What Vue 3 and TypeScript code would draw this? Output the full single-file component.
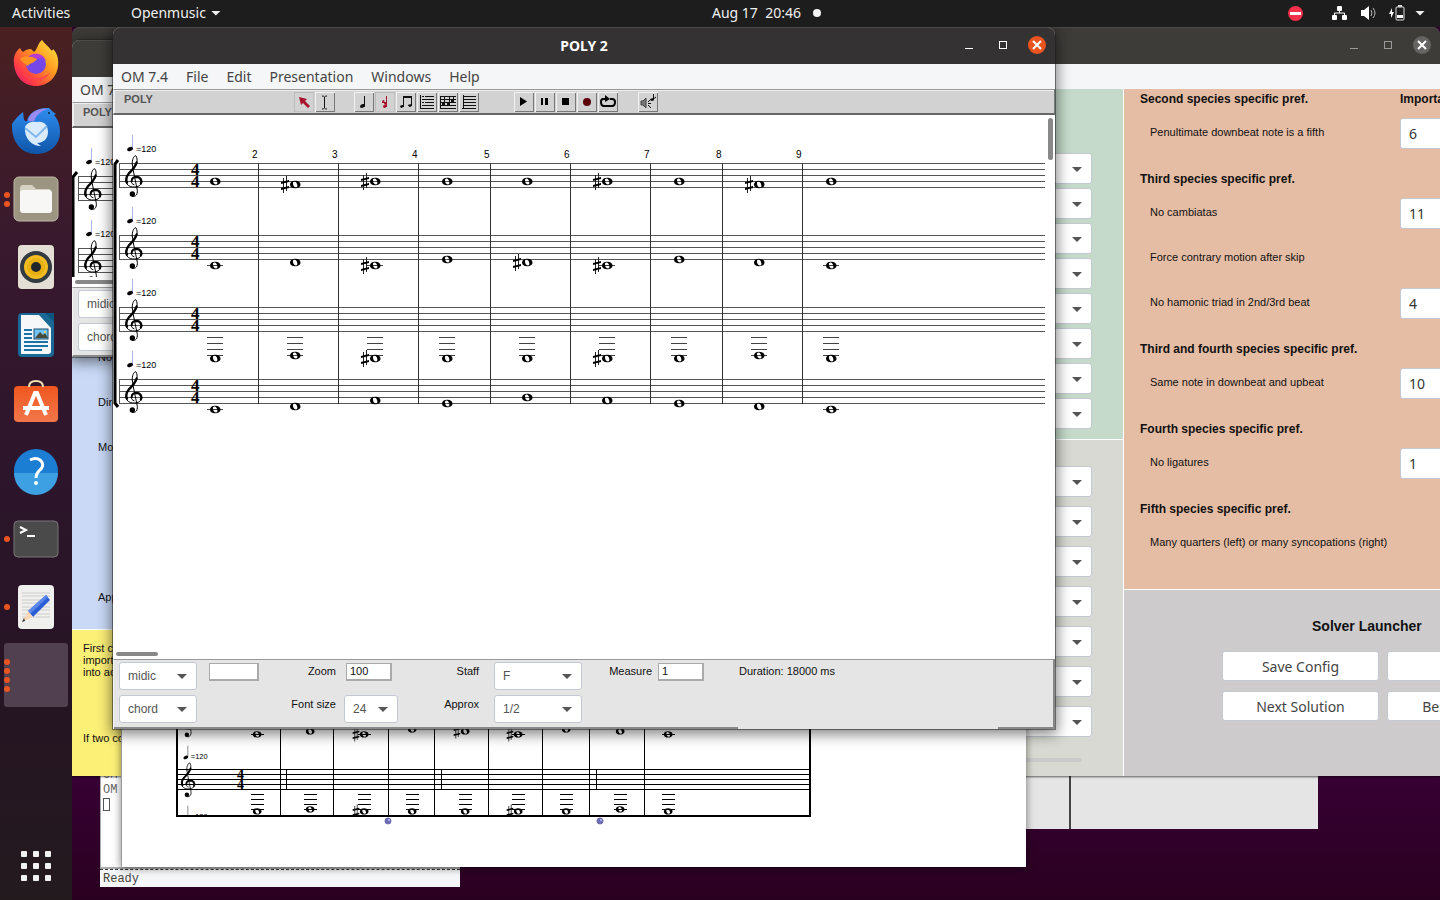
<script setup lang="ts">
interface Shape {
  d: string
  fill?: string
  stroke?: string
  width?: number
}
interface Tool {
  label: string
  pressed?: boolean
  shapes: Shape[]
}
interface Note {
  x: number
  y: number
  sharp?: boolean
  ledgers?: number[]
}
interface PrefItem {
  label: string
  value?: string
}
interface PrefGroup {
  title: string
  items: PrefItem[]
}

const menus: string[] = ['OM 7.4', 'File', 'Edit', 'Presentation', 'Windows', 'Help']
const ink = '#111'
const red = '#a8142c'

const toolGroups: Tool[][] = [
  [
    { label: 'Select', pressed: true, shapes: [{ d: 'M5 5 L13 7 L11 9 L16 14 L14 16 L9 11 L7 13 Z', fill: red }] },
    { label: 'Insert', shapes: [{ d: 'M7 4 Q9 4 9.5 5 Q10 4 12 4 M9.5 5 V16 M7 17 Q9 17 9.5 16 Q10 17 12 17', stroke: ink, width: 1 }] }
  ],
  [
    { label: 'Note', shapes: [{ d: 'M10.500 4 V15', stroke: ink, width: 1 }, { d: 'M6 14.500 Q6 12.500 8.500 12 H11 Q11 15 8 16 Q6 16 6 14.500 Z', fill: ink }] },
    { label: 'Chord', pressed: true, shapes: [{ d: 'M11.500 4 V15', stroke: red, width: 1 }, { d: 'M8 15 Q8 12 12 12 Q12 16 9 16 Z M7 10 Q7 8 9 8 Q10 9 9 11 H7 Z M9 10 H12 V12 H9 Z', fill: red }] },
    { label: 'Group', shapes: [{ d: 'M7.500 15 V5 H15.500 V14', stroke: ink, width: 1 }, { d: 'M7 4 H16 V6 H7 Z M4 14.500 Q4 12.500 7.500 13 Q7.500 16 5 16 Z M12 13.500 Q12 12 16 12 Q16 15 13.500 15 Z', fill: ink }] },
    { label: 'Measure', shapes: [{ d: 'M3.500 3 V17 M8 4.500 H17 M8 7.500 H17 M8 10.500 H17 M8 13.500 H17 M4 16.500 H17', stroke: ink, width: 1 }, { d: 'M5 4 H7 V5 H5 Z M5 7 H8 V8 H5 Z M5 10 H7 V11 H5 Z M5 13 H8 V14 H5 Z', fill: ink }] },
    { label: 'Voice', shapes: [{ d: 'M2 4.500 H18 M2 7.500 H18 M2 10.500 H18 M2 13.500 H18 M6.500 5 V13 M11.500 5 V12 M15.500 4 V10 M2.500 4 V16 M2 16.500 H18', stroke: ink, width: 1 }, { d: 'M4 11 H7 V14 H4 Z M9 10 H12 V13 H9 Z M13 8 H16 V10 H13 Z', fill: ink }] },
    { label: 'Poly', shapes: [{ d: 'M4.500 3 V17 M4 4.500 H17 M4 7.500 H17 M4 10.500 H17 M4 13.500 H17 M3 16.500 H17', stroke: ink, width: 1 }] }
  ],
  [
    { label: 'Play', shapes: [{ d: 'M6 5 L13 9.500 L6 14 Z', fill: '#000' }] },
    { label: 'Pause', shapes: [{ d: 'M6 6 H8 V13 H6 Z M10 6 H13 V13 H10 Z', fill: '#000' }] },
    { label: 'Stop', shapes: [{ d: 'M6 6 H13 V13 H6 Z', fill: '#000' }] },
    { label: 'Record', shapes: [{ d: 'M6 10 a4 4 0 1 0 8 0 a4 4 0 1 0 -8 0', fill: '#5c0008' }] },
    { label: 'Loop', shapes: [{ d: 'M12 7 H14 Q17 7 17 10 Q17 14 14 14 H6 Q3 14 3 10 Q3 7 5 7 H8', stroke: '#000', width: 2 }, { d: 'M7 3 L12 7 L7 10 Z', fill: '#000' }] }
  ],
  [
    { label: 'Player', shapes: [{ d: 'M3 9 H5 L8 6 V16 L5 13 H3 Z', fill: '#777', stroke: '#444', width: 1 }, { d: 'M10 10 L12 8 M10 11.500 H13 M10 13 L13 16 M15.500 2 V7 L18 5', stroke: ink, width: 1 }, { d: 'M12 8 Q12 6 16 6 V8 Q14 10 12 8 Z', fill: ink }] }
  ]
]

const xs: number[] = [102, 182, 262, 334, 414, 494, 566, 646, 718]
const bars: number[] = [145, 225, 305, 377, 457, 537, 609, 689]
const staffTops: number[] = [48, 120, 192, 264]

function build(ys: number[], sharps: number[], ledgers: (y: number) => number[]): Note[] {
  return ys.map((y, i) => ({ x: xs[i], y, sharp: sharps.includes(i), ledgers: ledgers(y) }))
}
const notes: Note[] = [
  ...build([66, 69, 66, 66, 66, 66, 66, 69, 66], [1, 2, 5, 7], () => []),
  ...build([150, 147, 150, 144, 147, 150, 144, 147, 150], [2, 4, 5], y => (y === 150 ? [150] : [])),
  ...build([243, 240, 243, 243, 243, 243, 243, 240, 243], [2, 5], () => [222, 228, 234, 240]),
  ...build([294, 291, 285, 288, 282, 285, 288, 291, 294], [], y => (y === 294 ? [294] : []))
]

// Miniature of the score shown in the patch: staff space is 5px instead of 6px
const miniXs: number[] = [81, 134, 188, 236, 289, 342, 390, 444, 492]
const miniBars: number[] = [104, 157, 212, 258, 312, 366, 413, 468]
const miniTicks: number[] = [110, 265, 420]
const miniNotes: Note[] = [
  ...[34, 31, 34, 29, 31, 34, 29, 31, 34].map((y, i) => ({ x: miniXs[i], y, sharp: [2, 4, 5].includes(i), ledgers: y === 34 ? [34] : [] })),
  ...[111, 109, 111, 111, 111, 111, 111, 109, 111].map((y, i) => ({ x: miniXs[i], y, sharp: [2, 5].includes(i), ledgers: [94, 99, 104, 109] }))
]

const prefs: PrefGroup[] = [
  { title: 'Second species specific pref.', items: [{ label: 'Penultimate downbeat note is a fifth', value: '6' }] },
  {
    title: 'Third species specific pref.',
    items: [{ label: 'No cambiatas', value: '11' }, { label: 'Force contrary motion after skip' }, { label: 'No hamonic triad in 2nd/3rd beat', value: '4' }]
  },
  { title: 'Third and fourth species specific pref.', items: [{ label: 'Same note in downbeat and upbeat', value: '10' }] },
  { title: 'Fourth species specific pref.', items: [{ label: 'No ligatures', value: '1' }] },
  { title: 'Fifth species specific pref.', items: [{ label: 'Many quarters (left) or many syncopations (right)' }] }
]
const solverButtons: string[] = ['Save Config', 'Start', 'Next Solution', 'Best Solution']

const dock: { name: string; dots: number }[] = [
  { name: 'Firefox', dots: 0 },
  { name: 'Thunderbird', dots: 0 },
  { name: 'Files', dots: 2 },
  { name: 'Rhythmbox', dots: 0 },
  { name: 'Writer', dots: 0 },
  { name: 'Software', dots: 0 },
  { name: 'Help', dots: 0 },
  { name: 'Terminal', dots: 1 },
  { name: 'Text Editor', dots: 1 },
  { name: 'Openmusic', dots: 4 }
]
</script>

<template>
  <div class="screen">
    <svg class="defs" width="0" height="0" aria-hidden="true">
      <defs>
        <g id="clef" transform="scale(0.3333)" fill="none" stroke="#000" stroke-linecap="round">
          <path stroke-width="3" d="M22 5 C20 -10 27 -22 32 -22 C37 -17 37 -8 35 0 C32 13 20 24 11 33 C3 42 0 53 5 62 C10 70 20 73 30 72 C43 71 51 64 51 55 C51 45 43 39 34 40 C24 41 18 47 19 55 C19 60 22 64 27 65" />
          <path stroke-width="7" d="M35 -2 C31 12 19 24 11 32 C4 41 2 50 6 59" />
          <path stroke-width="6" d="M47 62 C51 54 47 43 35 42 C26 42 20 47 20 55" />
          <path stroke-width="3" d="M22 5 C25 28 33 60 37 82 C38 95 32 102 22 100" />
          <circle cx="22" cy="93" r="8" fill="#000" stroke="none" />
        </g>
        <path id="whole" fill-rule="evenodd" d="M-5 0.500 C-5 -2 -3 -3.300 0 -3.300 C3 -3.300 5.500 -2 5.500 0.500 C5.500 3 3 4.200 0 4.200 C-3 4.200 -5 3 -5 0.500 Z M-2 -0.500 C-2 1.500 -0.800 3.400 0.800 3.400 C2.300 3.400 2.600 2.400 2.300 1 C1.900 -1 0.800 -2.500 -0.400 -2.500 C-1.700 -2.500 -2 -1.600 -2 -0.500 Z" />
        <g id="sharp">
          <path d="M-1.500 -6 V9 M1.500 -8 V7" stroke="#222" stroke-width="1" />
          <path d="M-4 -2 L4 -4 V-2 L-4 0 Z M-4 4 L4 2 V4 L-4 6 Z" />
        </g>
        <g id="staff-start">
          <rect x="0" y="0" width="1" height="25" fill="#555" />
          <rect x="13" y="-28" width="1" height="14" fill="#aab4f0" />
          <ellipse cx="11" cy="-14" rx="3" ry="2" transform="rotate(-25 11 -14)" />
          <text x="17" y="-11" class="tempo">=120</text>
          <use href="#clef" x="6" y="0" />
        </g>
        <linearGradient id="ff" x1="1" y1="0" x2="0" y2="1"><stop offset="0" stop-color="#fff04a" /><stop offset=".4" stop-color="#ff9a1f" /><stop offset=".75" stop-color="#ff3b45" /><stop offset="1" stop-color="#e3108a" /></linearGradient>
        <linearGradient id="tb" x1="0" y1="0" x2="0" y2="1"><stop offset="0" stop-color="#2e8df0" /><stop offset="1" stop-color="#0f55a8" /></linearGradient>
        <linearGradient id="sw" x1="0" y1="0" x2="0" y2="1"><stop offset="0" stop-color="#f1571f" /><stop offset="1" stop-color="#f0764a" /></linearGradient>
      </defs>
    </svg>

    <header class="topbar">
      <span>Activities</span>
      <span class="app-menu">Openmusic <i class="caret"></i></span>
      <span class="clock">Aug 17&nbsp; 20:46 <i class="unread"></i></span>
      <span class="tray">
        <svg width="15" height="15" viewBox="0 0 15 15"><circle cx="7.500" cy="7.500" r="7.500" fill="#f4304a" /><rect x="2" y="6" width="11" height="3" fill="#fff" /></svg>
        <svg class="net" width="16" height="14" viewBox="0 0 16 14" fill="#fff"><rect x="5" y="0" width="5" height="5" rx="1" /><rect x="0" y="9" width="5" height="5" rx="1" /><rect x="10" y="9" width="5" height="5" rx="1" /><path d="M7.500 4 V7 M2.500 10 V7 H12.500 V10" fill="none" stroke="#fff" /></svg>
        <svg class="vol" width="16" height="14" viewBox="0 0 16 14"><path d="M0 4 H3 L8 0 V14 L3 10 H0 Z" fill="#fff" /><path d="M10 4 Q12 7 10 10 M12 2 Q16 7 12 12" fill="none" stroke="#bbb" /></svg>
        <svg class="bat" width="16" height="16" viewBox="0 0 16 16"><path d="M3 3 L0 9 H2 V13 L5 7 H3 Z" fill="#fff" /><rect x="7" y="2" width="8" height="13" rx="1" fill="none" stroke="#ddd" /><rect x="9" y="0" width="4" height="2" fill="#ddd" /><rect x="8" y="10" width="6" height="3" fill="#fff" /></svg>
        <i class="caret"></i>
      </span>
    </header>

    <div class="workspace">
      <nav class="dock">
        <button v-for="a in dock" :key="a.name" class="dock-item" :class="{ current: a.dots === 4 }" :aria-label="a.name">
          <span class="dots"><i v-for="n in a.dots" :key="n"></i></span>
          <svg width="48" height="48" viewBox="0 0 48 48" aria-hidden="true">
            <template v-if="a.name === 'Firefox'">
              <path d="M2 25 C1 17 4 12 8 9 C9 11 10 12 11 13 C13 11 16 10 19 10 L22 13 C25 11 26 4 30 1 C33 5 36 7 39 11 C40 12 41 11 41 10 C45 14 47 20 46 27 C45 38 36 47 24 47 C12 47 3 38 2 25 Z" fill="url(#ff)" />
              <circle cx="24" cy="25" r="10" fill="#7647e8" />
              <path d="M15 19 C20 13 31 13 34 22 C30 18 27 19 25 20 Z" fill="#b73bd0" />
              <path d="M8 20 C12 16 17 18 20 18 L25 20 C23 24 17 24 16 27 C12 25 10 22 8 20 Z" fill="#ff9420" />
              <path d="M7 29 C12 40 29 43 38 33 C35 43 15 48 7 29 Z" fill="#ff4151" opacity=".7" />
            </template>
            <template v-else-if="a.name === 'Thunderbird'">
              <path d="M0 17 C3 12 7 8 11 5 C12 10 11 15 15 14 C16 6 26 0 37 1 C39 3 41 5 44 7 L42 8 C46 12 48 19 48 25 C48 38 38 47 24 47 C8 47 -1 33 0 17 Z" fill="url(#tb)" />
              <path d="M16 13 C19 4 27 1 36 2 C28 4 24 9 22 14 C19 14 17 15 16 13 Z" fill="#9b8bf0" />
              <path d="M13 20 C15 15 21 14 25 15 C32 14 36 18 36 25 C36 32 31 36 25 36 L29 39 C20 39 12 32 13 20 Z" fill="#d9ecff" />
              <path d="M13 21 L24 30 L35 19" fill="none" stroke="#83b7ea" stroke-width="2" />
              <circle cx="37" cy="6" r="1" fill="#023" />
            </template>
            <template v-else-if="a.name === 'Files'">
              <rect x="2" y="2" width="44" height="44" rx="5" fill="#9b9582" stroke="#bdb8a8" />
              <path d="M8 13 Q8 10 11 10 H20 L24 14 H38 V20 H8 Z" fill="#d5d1c3" /><rect x="8" y="15" width="32" height="23" rx="3" fill="#f7f7f5" />
            </template>
            <template v-else-if="a.name === 'Rhythmbox'">
              <rect x="6" y="2" width="36" height="44" rx="4" fill="#e3dfd5" /><circle cx="24" cy="24" r="16" fill="#333b42" /><circle cx="24" cy="24" r="12" fill="#f3bd22" /><circle cx="24" cy="24" r="9" fill="#e8b012" /><circle cx="24" cy="24" r="5" fill="#22262a" />
            </template>
            <template v-else-if="a.name === 'Writer'">
              <rect x="6" y="2" width="36" height="44" rx="4" fill="#1a6896" /><path d="M9 4 H27 L39 17 V40 Q39 43 36 43 H9 Z" fill="#f5f7f8" /><path d="M33 2 H42 V11 Z" fill="#0b5681" />
              <path d="M12 19 H20 M12 23 H20 M12 27 H20 M12 31 H36 M12 35 H36 M12 39 H30" stroke="#1d73a6" stroke-width="2" /><rect x="22" y="18" width="14" height="10" fill="#72c4f5" stroke="#1d4f70" /><path d="M23 27 L28 21 L31 24 L33 22 L36 27 Z" fill="#474b36" /><circle cx="33" cy="21" r="1" fill="#ffe14a" />
            </template>
            <template v-else-if="a.name === 'Software'">
              <rect x="2" y="7" width="44" height="36" rx="4" fill="url(#sw)" />
              <path d="M14 36 L23 14 H25 L34 36 M11 29 H37" fill="none" stroke="#fff" stroke-width="4" /><path d="M17 8 Q17 2 24 2 Q31 2 31 8" fill="none" stroke="#f2dfb3" stroke-width="2" />
            </template>
            <template v-else-if="a.name === 'Help'">
              <circle cx="24" cy="24" r="22" fill="#1b7ed3" /><path d="M2 26 A22 22 0 0 0 46 26 Z" fill="#3da0e2" /><path d="M18 13 Q24 10 28 13 Q33 17 29 22 Q24 26 24 31" fill="none" stroke="#fff" stroke-width="3" /><circle cx="24" cy="36" r="2" fill="#fff" />
            </template>
            <template v-else-if="a.name === 'Terminal'">
              <rect x="2" y="6" width="44" height="36" rx="4" fill="#4a4a4a" stroke="#777" /><path d="M8 12 L14 15 L8 18 M15 21 H23" fill="none" stroke="#fff" stroke-width="2" />
            </template>
            <template v-else-if="a.name === 'Text Editor'">
              <rect x="6" y="2" width="36" height="44" rx="4" fill="#f0f0ef" /><path d="M10 10 H38 M10 13 H38 M10 17 H38 M10 20 H38 M10 24 H38 M10 27 H38 M10 31 H38 M10 34 H38" stroke="#ccc" /><path d="M34 12 L38 17 L21 34 L16 28 Z" fill="#2a5fd6" /><path d="M34 12 L36 14 L18 31 L16 28 Z" fill="#5b86ea" /><path d="M16 28 L21 34 L10 39 Z" fill="#f8d7b5" /><path d="M12 35 L13 38 L10 39 Z" fill="#333" />
            </template>
          </svg>
        </button>
        <button class="apps" aria-label="Show Applications"><i v-for="n in 9" :key="n"></i></button>
      </nav>

      <main class="desktop">
        <section class="win listener">
          <div class="listener-body"><span>OM</span><span>OM</span><i class="cursor"></i></div>
          <div class="listener-status">Ready</div>
        </section>

        <section class="win workspace-win"><div></div><div></div></section>

        <section class="win prefs">
          <div class="titlebar inactive">
            <span></span>
            <div class="controls">
              <button aria-label="Minimize"><i class="min"></i></button><button aria-label="Maximize"><i class="max"></i></button>
              <button aria-label="Close" class="close"><svg width="10" height="10" viewBox="0 0 10 10"><path d="M1 1 L9 9 M9 1 L1 9" stroke="#fff" stroke-width="2" /></svg></button>
            </div>
          </div>
          <div class="menubar"></div>
          <div class="pref-grid">
            <div class="col">
              <div class="blue"><p>No</p><p>Dire</p><p class="gap">Mot</p><p>Appr</p></div>
              <div class="yellow"><p>First ch<br />importa<br />into acc</p><p>If two cos</p></div>
            </div>
            <div class="col">
              <div class="green"><label v-for="n in 8" :key="n" class="sel"><select :aria-label="'General cost ' + n"></select></label></div>
              <div class="stone"><label v-for="n in 7" :key="n" class="sel"><select :aria-label="'Motion cost ' + n"></select></label><i class="track"></i></div>
            </div>
            <div class="col">
              <div class="salmon">
                <div v-for="(g, gi) in prefs" :key="g.title" class="pref-group">
                  <div class="pref-head"><h3>{{ g.title }}</h3><h3 v-if="gi === 0">Importance</h3></div>
                  <div v-for="(it, ii) in g.items" :key="it.label" class="pref-row">
                    <label :for="'p' + gi + ii">{{ it.label }}</label>
                    <select v-if="it.value" :id="'p' + gi + ii"><option>{{ it.value }}</option></select>
                  </div>
                </div>
              </div>
              <div class="solver">
                <h2>Solver Launcher</h2>
                <div class="solver-grid"><button v-for="b in solverButtons" :key="b">{{ b }}</button></div>
              </div>
            </div>
          </div>
        </section>

        <section class="win patch">
          <svg class="mini" width="636" height="125" viewBox="0 0 636 125" shape-rendering="crispEdges">
            <defs><clipPath id="miniclip"><rect x="0" y="0" width="635" height="117" /></clipPath></defs>
            <g clip-path="url(#miniclip)">
              <rect v-for="x in miniBars" :key="x" :x="x" y="0" width="1" height="117" />
              <rect v-for="x in miniTicks" :key="x" :x="x" y="69" width="1" height="21" />
              <rect v-for="n in 5" :key="n" x="0" :y="64 + n * 5" width="634" height="1" />
              <template v-for="(n, i) in miniNotes" :key="i">
                <rect v-for="l in n.ledgers" :key="l" :x="n.x - 6" :y="l" width="13" height="1" />
                <g shape-rendering="auto">
                  <use href="#whole" :transform="`translate(${n.x} ${n.y}) scale(0.83)`" />
                  <use v-if="n.sharp" href="#sharp" :transform="`translate(${n.x - 8} ${n.y}) scale(0.83)`" />
                </g>
              </template>
              <g v-for="t in [9, 69, 129]" :key="t" shape-rendering="auto" :transform="`translate(-1 ${t}) scale(0.83)`">
                <use href="#clef" x="7" y="0" />
                <rect x="15" y="-28" width="1" height="14" fill="#777" />
                <ellipse cx="13" cy="-14" rx="3" ry="2" transform="rotate(-25 13 -14)" />
                <text x="19" y="-12" class="tempo">=120</text>
              </g>
              <text x="61" y="79" class="sig mini-sig">4</text><text x="61" y="89" class="sig mini-sig">4</text>
            </g>
            <rect x="0" y="0" width="2" height="117" /><rect x="633" y="0" width="2" height="117" /><rect x="0" y="115" width="635" height="2" />
            <g shape-rendering="auto"><g v-for="x in [212, 424]" :key="x"><circle :cx="x" cy="121" r="3" fill="#6d6bb8" stroke="#6a6aa8" /><circle :cx="x + 1" cy="120" r="1" fill="#c4c4ff" /></g></g>
          </svg>
        </section>

        <section class="win poly poly-back">
          <div class="titlebar inactive"></div>
          <div class="menubar"><button v-for="m in menus.slice(0, 2)" :key="m">{{ m }}</button></div>
          <div class="toolbar"><strong>POLY</strong></div>
          <div class="score">
            <svg width="100%" height="150" shape-rendering="crispEdges">
              <path d="M1 150 V49 L5 44" fill="none" stroke="#000" stroke-width="3" shape-rendering="auto" />
              <g v-for="t in staffTops.slice(0, 2)" :key="t"><rect v-for="n in 5" :key="n" x="6" :y="t - 6 + n * 6" width="100%" height="1" fill="#555" /><use href="#staff-start" x="6" :y="t" shape-rendering="auto" /></g>
            </svg>
            <i class="hstrip"><i class="hbar"></i></i>
          </div>
          <div class="footer">
            <div class="fields">
              <label class="sel"><select aria-label="Back unit"><option>midic</option></select></label>
              <label class="sel second"><select aria-label="Back mode"><option>chord</option></select></label>
            </div>
          </div>
        </section>

        <section class="win poly poly-front">
          <div class="titlebar">
            <h1>POLY 2</h1>
            <div class="controls">
              <button aria-label="Minimize"><i class="min"></i></button><button aria-label="Maximize"><i class="max"></i></button>
              <button aria-label="Close" class="close"><svg width="10" height="10" viewBox="0 0 10 10"><path d="M1 1 L9 9 M9 1 L1 9" stroke="#fff" stroke-width="2" /></svg></button>
            </div>
          </div>
          <div class="menubar"><button v-for="m in menus" :key="m">{{ m }}</button></div>
          <div class="toolbar">
            <strong>POLY</strong>
            <div v-for="(g, i) in toolGroups" :key="i" class="tools">
              <button v-for="t in g" :key="t.label" :class="{ pressed: t.pressed }" :aria-label="t.label">
                <svg width="20" height="20" viewBox="0 0 20 20"><path v-for="(s, k) in t.shapes" :key="k" :d="s.d" :fill="s.fill || 'none'" :stroke="s.stroke || 'none'" :stroke-width="s.width || 0" /></svg>
              </button>
            </div>
          </div>
          <div class="score">
            <svg width="100%" height="320">
              <path d="M2 289 V49 L5 45 M2 288 L5 292" fill="none" stroke="#000" stroke-width="3" />
              <g shape-rendering="crispEdges">
                <g v-for="t in staffTops" :key="t"><rect v-for="n in 5" :key="n" x="6" :y="t - 6 + n * 6" width="926" height="1" fill="#555" /></g>
                <rect v-for="b in bars" :key="b" :x="b" y="48" width="1" height="241" fill="#333" />
                <template v-for="(n, i) in notes" :key="i"><rect v-for="l in n.ledgers" :key="l" :x="n.x - 8" :y="l" width="16" height="1" fill="#444" /></template>
              </g>
              <text v-for="(b, i) in bars" :key="b" :x="b - 6" y="43" class="barnum">{{ i + 2 }}</text>
              <g v-for="t in staffTops" :key="t">
                <use href="#staff-start" x="6" :y="t" />
                <text x="78" :y="t + 12" class="sig">4</text><text x="78" :y="t + 24" class="sig">4</text>
              </g>
              <g v-for="(n, i) in notes" :key="i">
                <use href="#whole" :x="n.x" :y="n.y" />
                <use v-if="n.sharp" href="#sharp" :x="n.x - 10" :y="n.y" />
              </g>
            </svg>
            <i class="vbar"></i><i class="hstrip"><i class="hbar"></i></i>
          </div>
          <div class="footer">
            <div class="fields">
              <label class="sel"><select aria-label="Unit"><option>midic</option></select></label>
              <input type="text" aria-label="Value" />
              <label class="cap" for="zoom">Zoom</label><input id="zoom" type="text" value="100" class="narrow" />
              <label class="cap wide" for="staff">Staff</label><span class="sel"><select id="staff"><option>F</option></select></span>
              <label class="cap tight" for="measure">Measure</label><input id="measure" type="text" value="1" />
              <span class="duration">Duration: 18000 ms</span>
              <label class="sel second"><select aria-label="Mode"><option>chord</option></select></label>
              <label class="cap size" for="fsize">Font size</label><span class="sel"><select id="fsize"><option>24</option></select></span>
              <label class="cap wide" for="approx">Approx</label><span class="sel"><select id="approx"><option>1/2</option></select></span>
            </div>
            <div class="edge"><i></i><i></i><i></i></div>
          </div>
        </section>
      </main>
    </div>
  </div>
</template>

<style>
html, body { margin: 0; overflow: hidden; }
</style>

<style scoped>
* { box-sizing: border-box; }
.screen { height: 100vh; display: flex; flex-direction: column; overflow: hidden; background: #2c0022; font-family: "Liberation Sans", Arial, sans-serif; font-size: 11px; color: #111; }
.defs { position: absolute; }
button { font: inherit; color: inherit; padding: 0; border: 0; background: none; }
h1, h2, h3, p { margin: 0; }
i { display: block; }
svg { display: block; }
.topbar { flex: none; height: 27px; background: #1d1d1d; color: #f0f0f0; font: 14px/26px "Noto Sans", sans-serif; display: grid; grid-template-columns: 119px 581px 1fr auto; padding: 0 15px 1px 12px; }
.app-menu, .clock, .tray { display: flex; align-items: center; }
.caret { width: 10px; height: 5px; background: #f0f0f0; clip-path: polygon(0 0, 100% 0, 50% 100%); margin-left: 5px; }
.unread { width: 8px; height: 8px; border-radius: 4px; background: #f4f4f4; margin-left: 12px; }
.net { margin-left: 29px; }
.vol { margin-left: 13px; }
.bat { margin-left: 12px; }
.tray .caret { margin-left: 10px; }

.workspace { flex: 1; display: flex; min-height: 0; }
.dock { width: 72px; flex: none; display: flex; flex-direction: column; align-items: center; gap: 4px; padding: 4px 4px 11px; background: linear-gradient(#4a2021, #38192e 25%, #2d152b 50%, #261424 75%, #231a1e); }
.dock-item { width: 64px; height: 64px; flex: none; display: grid; grid-template-columns: 6px 1fr; align-items: center; border-radius: 3px; }
.dock-item svg { margin-left: 2px; }
.current { background: #514150; }
.dots { display: flex; flex-direction: column; gap: 3px; }
.dots i { width: 6px; height: 6px; border-radius: 3px; background: #e95420; }
.apps { margin-top: auto; display: grid; grid-template-columns: repeat(3, 6px); gap: 6px; padding: 8px; }
.apps i { width: 6px; height: 6px; border-radius: 1px; background: #f2f2f2; }

.desktop { flex: 1; position: relative; overflow: hidden; background: linear-gradient(#34022f 80%, #360033 86%, #2a0020); }
.win { position: absolute; }
.listener { left: 28px; top: 700px; width: 360px; height: 160px; display: flex; flex-direction: column; font: 12px/15px "Liberation Mono", monospace; color: #444; background: #f5f6f7; }
.listener-body { flex: 1; background: #fff; border-left: 1px solid #aaa; border-bottom: 2px solid #aaa; padding: 41px 2px 0; display: flex; flex-direction: column; color: #666; }
.cursor { width: 7px; height: 13px; border: 1px solid #555; }
.listener-status { height: 18px; border-top: 1px dashed #333; padding-left: 3px; line-height: 18px; }
.workspace-win { left: 900px; top: 700px; width: 346px; height: 102px; display: grid; grid-template-columns: 99px 1fr; background: #e5e5e5; }
.workspace-win div:first-child { border-right: 2px solid #444; }

.titlebar { height: 37px; display: grid; grid-template-columns: 1fr; align-items: center; background: #353233; border-radius: 8px 8px 0 0; box-shadow: inset 0 1px #4d4b4a; color: #fff; }
.titlebar > * { grid-area: 1 / 1; }
.titlebar h1 { text-align: center; font: bold 14px/36px "Noto Sans", sans-serif; }
.inactive { background: #3e3c39; }
.controls { justify-self: end; display: flex; align-items: center; gap: 16px; padding: 0 9px 2px 0; }
.controls button { width: 18px; height: 18px; display: grid; place-items: center; }
.min { width: 8px; height: 1px; background: #fff; margin-top: 7px; }
.max { width: 8px; height: 8px; border: 1px solid #fff; }
.controls .close { border-radius: 50%; background: #e95420; }
.inactive .min { background: #999; }
.inactive .max { border-color: #999; }
.inactive .controls .close { background: #666462; }
.menubar { height: 25px; display: flex; align-items: center; gap: 18px; padding-left: 8px; background: #f5f6f7; color: #444; font: 14px/25px "Noto Sans", sans-serif; }

.sel { position: relative; display: block; height: 28px; }
.sel::after { content: ""; position: absolute; right: 10px; top: 12px; width: 10px; height: 5px; background: #555; clip-path: polygon(0 0, 100% 0, 50% 100%); pointer-events: none; }
select { appearance: none; display: block; width: 100%; height: 100%; margin: 0; border: 1px solid #c3c8d2; border-radius: 3px; background: #fff; color: #555; padding: 0 8px; font: 12px "Liberation Sans", sans-serif; }

.prefs { left: 0; right: 0; top: 0; box-shadow: 0 1px 2px rgba(0, 0, 0, .6); }
.pref-grid { display: grid; grid-template-columns: 1fr 1fr 316px; gap: 1px; background: #fff; height: 687px; overflow: hidden; }
.col { display: flex; flex-direction: column; gap: 1px; min-width: 0; }
.blue { height: 540px; background: #c9d9f6; padding: 261px 0 0 26px; }
.blue p { line-height: 15px; margin-bottom: 30px; }
.blue .gap { margin-bottom: 135px; }
.yellow { flex: 1; background: #fdf077; padding: 12px 11px; line-height: 12px; }
.yellow p + p { margin-top: 54px; }
.green { height: 350px; background: #c5daca; padding: 64px 31px 0; display: flex; flex-direction: column; align-items: flex-end; gap: 5px; }
.stone { flex: 1; background: #d8d9d2; padding: 26px 31px 0; display: flex; flex-direction: column; align-items: flex-end; gap: 10px; }
.green .sel, .stone .sel { width: 120px; height: 31px; margin-bottom: -1px; flex: none; }
.green .sel::after, .stone .sel::after { top: 14px; right: 10px; }
.track { width: 90px; height: 4px; border-radius: 2px; background: #cacaca; margin: 12px 10px 0 0; }
.salmon { height: 500px; background: #e5bda5; padding-left: 16px; overflow: hidden; }
.pref-group { margin-bottom: 15px; }
.pref-head, .pref-row { display: grid; grid-template-columns: 260px 100px; }
.pref-head { height: 20px; line-height: 20px; }
.pref-head h3 { font-size: 12px; white-space: nowrap; }
.pref-row { height: 45px; align-items: center; }
.pref-row label { padding-left: 10px; white-space: nowrap; }
.pref-row select { height: 31px; margin-top: 3px; font: 14px "Noto Sans", sans-serif; color: #333; }
.solver { flex: 1; background: #cdcbcc; padding: 26px 0 0 98px; overflow: hidden; }
.solver h2 { font-size: 14px; line-height: 20px; padding-left: 90px; white-space: nowrap; }
.solver-grid { display: grid; grid-template-columns: 157px 157px; gap: 10px 8px; margin-top: 15px; }
.solver-grid button { height: 30px; border: 1px solid #c3c8d2; border-radius: 3px; background: #fff; color: #444; font: 14px "Noto Sans", sans-serif; }

.patch { left: 49px; width: 905px; top: 600px; height: 240px; background: #fff; border-left: 1px solid #999; box-shadow: 0 1px 8px rgba(0, 0, 0, .5); }
.mini { margin: 73px 0 0 54px; }

.poly { display: flex; flex-direction: column; background: #fff; border-radius: 8px 8px 0 0; box-shadow: 0 3px 14px 2px rgba(0, 0, 0, .5), 0 0 0 1px rgba(40, 40, 40, .5); }
.poly-back { left: 0; top: 13px; width: 300px; height: 317px; }
.poly-front { left: 41px; right: 385px; top: 0; height: 702px; }
.toolbar { height: 26px; display: flex; align-items: center; background: #d2d2d2; border: 1px solid; border-color: #999 #777 #666 #eee; border-bottom-width: 2px; padding-left: 10px; box-shadow: inset 1px 1px #eee; }
.toolbar strong { width: 170px; color: #555; font-size: 11px; line-height: 12px; padding-bottom: 6px; }
.tools { display: flex; gap: 1px; margin-right: 19px; }
.tools:nth-of-type(2) { margin-right: 35px; }
.tools:nth-of-type(3) { margin-right: 20px; }
.tools button { width: 20px; height: 20px; box-shadow: inset 1px 1px #f1f1f1, inset -1px -1px #777; }
.tools .pressed { box-shadow: inset 1px 1px #bbb, inset -1px -1px #c2c2c2; }
.score { flex: 1; min-height: 0; position: relative; overflow: hidden; background: #fff; }
.vbar { position: absolute; right: 2px; top: 3px; width: 5px; height: 42px; border-radius: 3px; background: #888; }
.hstrip { position: absolute; left: 0; right: 0; bottom: 0; height: 10px; padding: 3px; background: #fff; }
.hbar { width: 42px; height: 4px; border-radius: 2px; background: #888; }
.poly-back .hbar { width: 100px; }
.footer { flex: none; height: 70px; display: flex; flex-direction: column; justify-content: space-between; background: #e5e5e5; border-top: 1px solid #999; border-left: 1px solid #f4f4f4; border-right: 2px solid #888; }
.poly-back .footer { border-bottom: 2px solid #888; }
.fields { display: grid; grid-template-columns: 90px 50px 85px 54px 96px 88px 76px 46px auto; grid-auto-rows: 28px; row-gap: 5px; padding: 2px 0 0 5px; align-items: start; }
.fields > .sel:first-child, .second { width: 78px; grid-column: 1; }
.fields input { height: 18px; width: 100%; border: 1px solid #aaa; border-width: 1px 2px 2px 1px; margin: 1px 0 0; padding: 0 3px 1px; font: 11px "Liberation Sans", sans-serif; border-radius: 0; background: #fff; color: #111; }
.fields .narrow { width: 46px; margin-left: 2px; }
.cap { text-align: right; line-height: 18px; padding-right: 8px; }
.cap.wide { padding-right: 15px; }
.cap.tight { padding-right: 6px; }
.cap.size { grid-column: 3; }
.duration { padding-left: 35px; line-height: 18px; }
.edge { display: grid; grid-template-columns: 624px 260px 1fr; height: 2px; }
.edge i { background: #888; }
.edge i:nth-child(2) { background: #e5e5e5; }
.tempo { font: 9px "Liberation Sans", sans-serif; }
.barnum { font: 10px "Liberation Sans", sans-serif; }
.sig { font: bold 17px "Liberation Serif", serif; }
.mini-sig { font-size: 14px; }
</style>
